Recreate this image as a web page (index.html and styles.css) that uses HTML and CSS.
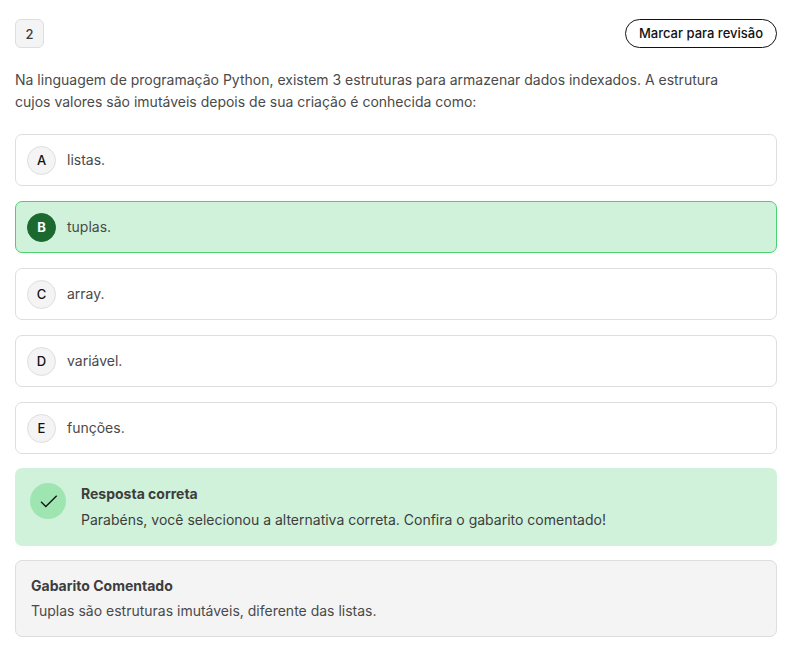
FILE: index.html
```html
<!DOCTYPE html>
<html lang="pt-BR">
<head>
<meta charset="utf-8">
<meta name="viewport" content="width=device-width, initial-scale=1">
<title>Questão 2</title>
<link rel="stylesheet" href="styles.css">
</head>
<body>
<main class="question">
  <header class="question-header">
    <span class="question-number">2</span>
    <button type="button" class="review-button">Marcar para revisão</button>
  </header>
  <p class="statement">Na linguagem de programação Python, existem 3 estruturas para armazenar dados indexados. A estrutura cujos valores são imutáveis depois de sua criação é conhecida como:</p>
  <div class="options">
    <button type="button" class="option"><span class="letter">A</span><span>listas.</span></button>
    <button type="button" class="option option-correct"><span class="letter">B</span><span>tuplas.</span></button>
    <button type="button" class="option"><span class="letter">C</span><span>array.</span></button>
    <button type="button" class="option"><span class="letter">D</span><span>variável.</span></button>
    <button type="button" class="option"><span class="letter">E</span><span>funções.</span></button>
  </div>
  <section class="feedback">
    <span class="feedback-icon">
      <svg width="36" height="36" viewBox="0 0 36 36" aria-hidden="true"><path d="M11 18.7 L15.8 23.5 L26.7 12.8" fill="none" stroke="#121212" stroke-width="1.3"/></svg>
    </span>
    <div>
      <h2 class="feedback-title">Resposta correta</h2>
      <p class="feedback-text">Parabéns, você selecionou a alternativa correta. Confira o gabarito comentado!</p>
    </div>
  </section>
  <section class="explanation">
    <h2 class="explanation-title">Gabarito Comentado</h2>
    <p class="explanation-text">Tuplas são estruturas imutáveis, diferente das listas.</p>
  </section>
</main>
</body>
</html>
```
FILE: styles.css
```css
* {
  box-sizing: border-box;
}

body {
  margin: 0;
  background: #fff;
  color: #4a4a4a;
  font-family: Inter, "Liberation Sans", sans-serif;
  font-size: 14px;
  line-height: 22px;
}

h2,
p {
  margin: 0;
}

h2 {
  font-size: 14px;
  font-weight: 700;
  color: #3d3d3d;
}

button {
  font-family: inherit;
  cursor: pointer;
}

.question {
  padding: 19px 15px;
}

.question-header {
  display: flex;
  justify-content: space-between;
  align-items: center;
}

.question-number {
  display: grid;
  place-items: center;
  width: 29px;
  height: 29px;
  border: 1px solid #dedede;
  border-radius: 6px;
  background: #f4f4f4;
  color: #3d3d3d;
  font-size: 13px;
  font-weight: 500;
}

.review-button {
  height: 29px;
  padding: 0 13px 2px;
  border: 1px solid #121212;
  border-radius: 15px;
  background: #fff;
  color: #121212;
  font-size: 13px;
  font-weight: 500;
}

.statement {
  margin: 21px 0;
  padding-right: 30px;
}

.options {
  display: grid;
  gap: 15px;
}

.option {
  display: flex;
  align-items: center;
  gap: 11px;
  min-height: 52px;
  padding: 0 11px;
  border: 1px solid #dedede;
  border-radius: 7px;
  background: #fff;
  color: #4a4a4a;
  font-size: 14px;
  line-height: 22px;
  text-align: left;
}

.letter {
  display: grid;
  place-items: center;
  width: 29px;
  height: 29px;
  border: 1px solid #dedede;
  border-radius: 50%;
  background: #f4f4f4;
  color: #121212;
  font-size: 13px;
  font-weight: 500;
}

.option-correct {
  border-color: #4ad06d;
  background: #d0f2da;
}

.option-correct .letter {
  border-color: #1c692f;
  background: #1c692f;
  color: #fff;
  font-weight: 700;
}

.feedback {
  display: flex;
  gap: 15px;
  margin-top: 14px;
  padding: 15px;
  border-radius: 7px;
  background: #d0f2da;
}

.feedback-icon {
  width: 36px;
  height: 36px;
  border-radius: 50%;
  background: #9fe5b1;
}

.feedback-icon svg {
  display: block;
}

.feedback-text {
  margin-top: 4px;
  color: #3d3d3d;
}

.explanation {
  margin-top: 14px;
  padding: 14px 15px;
  border: 1px solid #dedede;
  border-radius: 7px;
  background: #f4f4f4;
}

.explanation-text {
  margin-top: 3px;
}
```
